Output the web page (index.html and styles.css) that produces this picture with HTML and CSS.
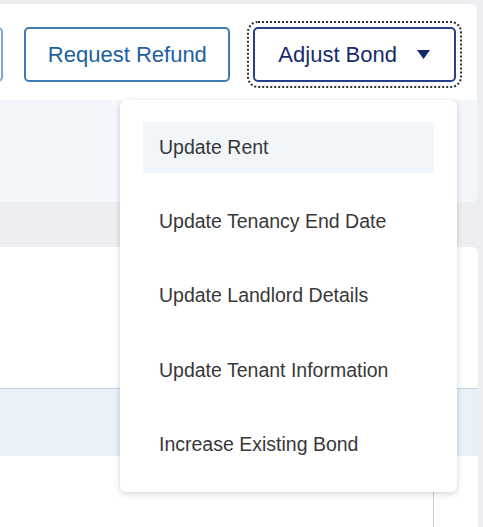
FILE: index.html
```html
<!DOCTYPE html>
<html lang="en">
<head>
<meta charset="utf-8">
<title>Bond actions</title>
<link rel="stylesheet" href="styles.css">
</head>
<body>
<div class="page">
  <section class="card top-card">
    <div class="toolbar">
      <div class="left-actions">
        <button class="btn btn-secondary btn-faded" type="button" aria-label="More bond actions"></button>
        <button class="btn btn-secondary" type="button">Request Refund</button>
      </div>
      <div class="dropdown">
        <button class="btn btn-primary-outline" type="button">
          <span>Adjust Bond</span>
          <svg class="caret" width="13" height="9" viewBox="0 0 13 9" aria-hidden="true"><path d="M0 0 H13 L6.5 9 Z" fill="currentColor"/></svg>
        </button>
        <ul class="menu">
          <li class="menu-item is-active">Update Rent</li>
          <li class="menu-item">Update Tenancy End Date</li>
          <li class="menu-item">Update Landlord Details</li>
          <li class="menu-item">Update Tenant Information</li>
          <li class="menu-item">Increase Existing Bond</li>
        </ul>
      </div>
    </div>
    <div class="summary"></div>
  </section>
  <section class="card table-card">
    <div class="table-intro"></div>
    <div class="table-head"></div>
    <div class="table-row">
      <div class="cell cell-main"></div>
      <div class="cell cell-side"></div>
    </div>
  </section>
</div>
</body>
</html>
```
FILE: styles.css
```css
* { box-sizing: border-box; }
html, body { margin: 0; padding: 0; }
body {
  background: #eceef2;
  font-family: "Liberation Sans", Arial, sans-serif;
  overflow: hidden;
}
.page {
  padding-top: 4px;
  padding-right: 5px;
}
.card {
  background: #fff;
  border-radius: 0 6px 6px 0;
}
.top-card {
  margin-right: 1px;
}
.toolbar {
  display: flex;
  align-items: center;
  padding: 23px 21px 18px 0;
  gap: 23px;
}
.left-actions {
  flex: 1;
  min-width: 0;
  display: flex;
  justify-content: flex-end;
  gap: 21px;
  overflow: hidden;
}
.btn {
  flex-shrink: 0;
  height: 55px;
  font-family: "Liberation Sans", Arial, sans-serif;
  font-size: 22px;
  background: #fff;
  border-radius: 5px;
  cursor: pointer;
  display: inline-flex;
  align-items: center;
  white-space: nowrap;
}
.btn-secondary {
  border: 2px solid #3f7ab0;
  color: #1d5f9f;
  padding: 0 21.5px;
}
.btn-faded {
  width: 180px;
  border-color: #7ea7cf;
}
.dropdown {
  position: relative;
  flex-shrink: 0;
}
.btn-primary-outline {
  border: 2px solid #24428a;
  color: #182c6c;
  padding: 0 24px 0 23px;
  gap: 20px;
  outline: 2px dotted #333;
  outline-offset: 4px;
}
.caret {
  display: block;
  color: #10296a;
}
.menu {
  position: absolute;
  top: 73px;
  right: -1px;
  width: 337px;
  margin: 0;
  padding: 22px 23px;
  list-style: none;
  background: #fff;
  border-radius: 6px;
  box-shadow: 0 2px 6px rgba(0, 0, 0, 0.16), 0 0 2px rgba(0, 0, 0, 0.06);
  display: flex;
  flex-direction: column;
  gap: 23.2px;
  z-index: 10;
}
.menu-item {
  height: 51px;
  display: flex;
  align-items: center;
  padding-left: 16px;
  font-size: 19.5px;
  color: #383838;
  white-space: nowrap;
}
.menu-item.is-active {
  background: #f1f6fb;
}
.summary {
  height: 102px;
  background: #f3f7fb;
  border-radius: 0 0 6px 0;
}
.table-card {
  margin-top: 45px;
  border-radius: 0 6px 0 0;
}
.table-intro {
  height: 141px;
}
.table-head {
  height: 68px;
  border-top: 1px solid #c3d4e4;
  background: #eaf0f8;
}
.table-row {
  display: flex;
  height: 71px;
}
.cell-main {
  width: 433px;
}
.cell-side {
  flex: 1;
  border-left: 1px solid #bcd0e2;
}
```
